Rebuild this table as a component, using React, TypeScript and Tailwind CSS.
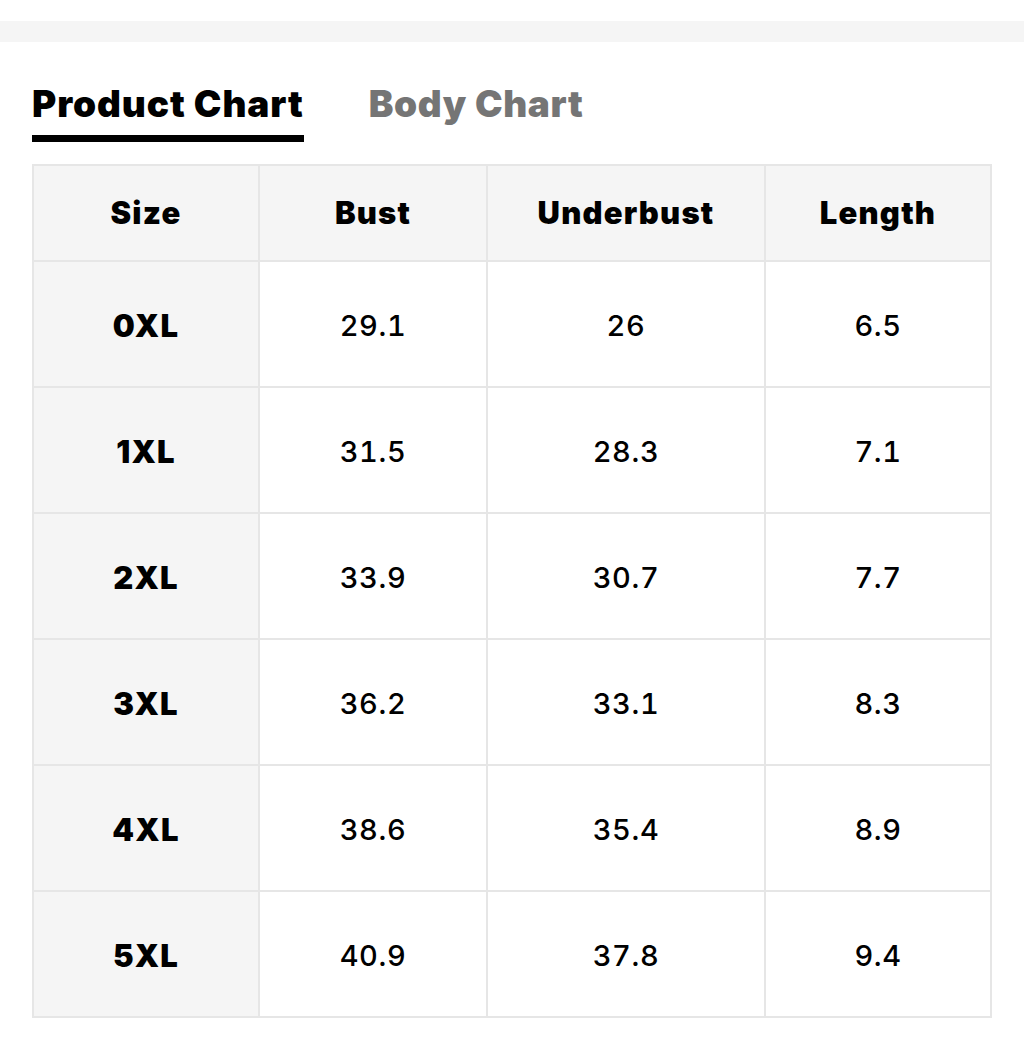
import React from "react";

const rows = [
  ["0XL", "29.1", "26", "6.5"],
  ["1XL", "31.5", "28.3", "7.1"],
  ["2XL", "33.9", "30.7", "7.7"],
  ["3XL", "36.2", "33.1", "8.3"],
  ["4XL", "38.6", "35.4", "8.9"],
  ["5XL", "40.9", "37.8", "9.4"],
];

export default function App() {
  return (
    <div className="w-[1024px] h-[1046px] bg-white font-['Inter',sans-serif] text-black">
      <div className="h-[21px]" />
      <div className="h-[21px] bg-[#f5f5f5]" />
      <div className="px-[32px]">
        <div className="flex items-start gap-[65px] pt-[40px]">
          <div className="flex flex-col">
            <span className="text-[37px] leading-[44px] font-black tracking-[0.9px]">Product Chart</span>
            <div className="h-[7px] bg-black mt-[9px]" />
          </div>
          <span className="text-[37px] leading-[44px] font-black tracking-[0.6px] text-[#757575]">Body Chart</span>
        </div>
        <div className="mt-[22px] w-[960px] grid grid-cols-[224px_226px_276px_224px] gap-[2px] p-[2px] bg-[#e6e6e6]">
          {["Size", "Bust", "Underbust", "Length"].map((h) => (
            <div key={h} className="h-[94px] bg-[#f5f5f5] flex items-center justify-center text-[31px] font-black tracking-[1.2px]">
              {h}
            </div>
          ))}
          {rows.map((r) =>
            r.map((c, i) => (
              <div
                key={r[0] + i}
                className={
                  i === 0
                    ? "h-[124px] pt-[4px] bg-[#f5f5f5] flex items-center justify-center text-[31px] font-black tracking-[1.2px]"
                    : "h-[124px] pt-[4px] bg-white flex items-center justify-center text-[29px] font-medium tabular-nums tracking-[0.6px]"
                }
              >
                {c}
              </div>
            ))
          )}
        </div>
      </div>
    </div>
  );
}
